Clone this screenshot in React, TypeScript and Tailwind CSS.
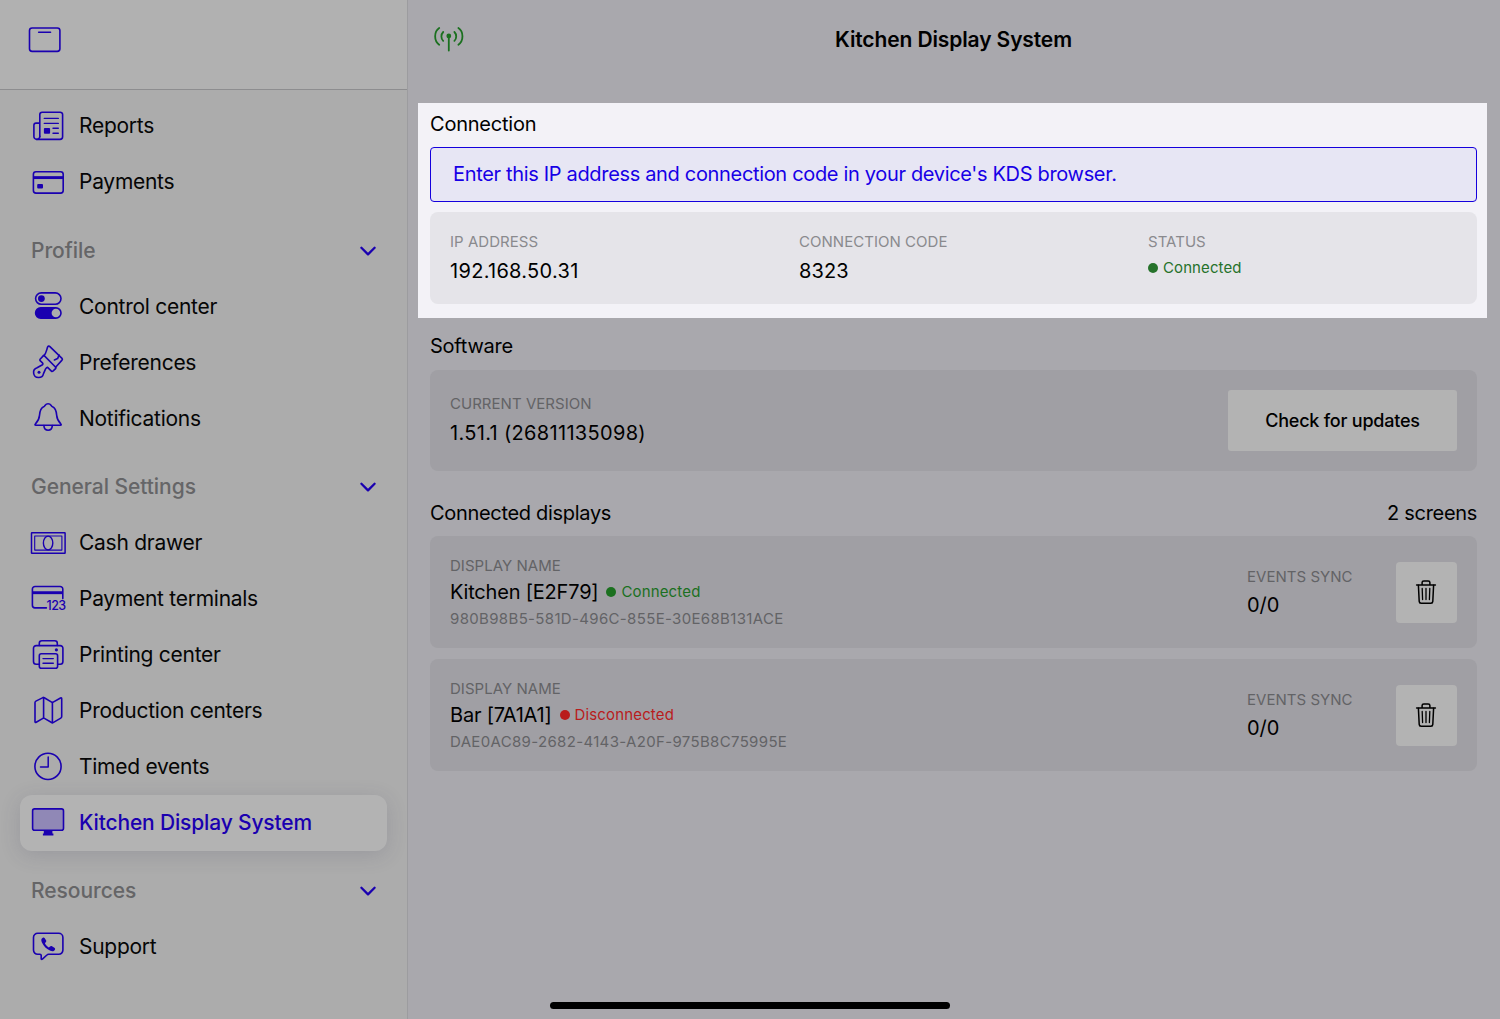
import React, { useState } from "react";
import { clsx } from "clsx";

/* ---------- Icons ---------- */

function MenuIcon({ children }: { children: React.ReactNode }) {
  return (
    <svg
      viewBox="0 0 36 36"
      className="size-9 shrink-0"
      fill="none"
      stroke="currentColor"
      strokeWidth={1.6}
      strokeLinecap="round"
      strokeLinejoin="round"
    >
      {children}
    </svg>
  );
}

const ReportsIcon = () => (
  <MenuIcon>
    <path d="M9.8 28.6V6.6a2.4 2.4 0 0 1 2.4-2.4h18a2.4 2.4 0 0 1 2.4 2.4v22.2a2.6 2.6 0 0 1-2.6 2.6H6.8a2.9 2.9 0 0 1-2.9-2.9V17.3a2.2 2.2 0 0 1 2.2-2.2h3.7" />
    <path d="M9.8 28.4a3 3 0 0 1-3 3" />
    <path d="M14.3 10.4h14M14.3 15.4h14M23 20.3h5.3M23 25.2h5.3" strokeWidth={1.4} />
    <rect x="13.9" y="19.9" width="6.2" height="5.8" rx="1" fill="currentColor" stroke="none" />
  </MenuIcon>
);

const PaymentsIcon = () => (
  <MenuIcon>
    <rect x="3.4" y="7.7" width="29.8" height="21.4" rx="2.6" />
    <path d="M3.4 13.6h29.8" strokeWidth={2.9} strokeLinecap="butt" />
    <rect x="7.2" y="20" width="5.8" height="4.6" rx="1" fill="currentColor" stroke="none" />
  </MenuIcon>
);

const ControlIcon = () => (
  <MenuIcon>
    <rect x="5.6" y="4.9" width="25.4" height="11.4" rx="5.7" />
    <circle cx="11.4" cy="10.6" r="3.4" fill="currentColor" stroke="none" />
    <rect x="5.6" y="19.8" width="25.4" height="10.3" rx="5.1" fill="currentColor" />
    <circle cx="25.9" cy="25" r="4.3" fill="#acacac" stroke="none" />
  </MenuIcon>
);

const BrushIcon = () => (
  <MenuIcon>
    <path d="M14.2 11.6 L25.7 23.3 C26.1 23.8 26 24.2 25.6 24.6 L22.9 27.2 C22.4 27.6 21.9 27.6 21.4 27.1 L17.6 23.4 C16.8 23.2 16.2 24 15.6 24.9 L13.5 29.6 A5 5 0 1 1 7.1 23.8 L12 21 C12.8 20.5 13.2 19.8 12.7 19.2 L10.1 16.7 C9.7 16.2 9.7 15.7 10.1 15.2 L13 12.1 C13.4 11.5 13.7 11.2 14.2 11.6 Z" />
    <path d="M13.9 11.7 C16.2 9.4 16.5 6.2 17.6 3.1 C18 2 19.1 1.8 19.9 2.6 L32 14.4 C32.6 15 32.5 15.6 32 16.1 L25.6 23.2" />
    <path d="M29.1 11 L27.6 14.6 L24.4 16" />
    <circle cx="9" cy="28.3" r="1.5" fill="currentColor" stroke="none" />
  </MenuIcon>
);

const BellIcon = () => (
  <MenuIcon>
    <path d="M5.7 25.3C4.9 25.3 4.8 24.5 5.3 24C7.8 21.3 9.2 20 9.5 15.4C9.8 10.5 10.8 7.6 14.1 6.4C15.1 6 15.3 3.7 18.1 3.7C20.9 3.7 21.1 6 22.1 6.4C25.4 7.6 26.4 10.5 26.7 15.4C27 20 28.4 21.3 30.9 24C31.4 24.5 31.3 25.3 30.5 25.3Z" />
    <path d="M13.9 25.6C14.1 28.5 15.8 30.2 18.1 30.2C20.4 30.2 22.1 28.5 22.3 25.6" />
  </MenuIcon>
);

const CashIcon = () => (
  <MenuIcon>
    <rect x="1.5" y="7.8" width="33.6" height="20.5" rx="0.4" strokeWidth={1.5} />
    <rect x="4.7" y="11" width="27.2" height="14.1" strokeWidth={1.1} />
    <ellipse cx="18.1" cy="18" rx="4.7" ry="6.9" strokeWidth={1.4} />
  </MenuIcon>
);

const TerminalIcon = () => (
  <MenuIcon>
    <path d="M16.4 26.9H4.9A2.6 2.6 0 0 1 2.4 24.3V8.1A2.6 2.6 0 0 1 5 5.5H30.2A2.6 2.6 0 0 1 32.8 8.1V17.6" />
    <path d="M2.4 11.7h30.4" strokeWidth={2.9} strokeLinecap="butt" />
    <text
      x="16.6"
      y="29.1"
      textLength="19.4"
      fontSize="12.5"
      fontWeight="500"
      fill="currentColor"
      stroke="none"
    >
      123
    </text>
  </MenuIcon>
);

const PrinterIcon = () => (
  <MenuIcon>
    <path d="M9.3 27.2H6.2a2.7 2.7 0 0 1-2.7-2.7V11.3a2.7 2.7 0 0 1 2.7-2.7h24a2.7 2.7 0 0 1 2.7 2.7v13.2a2.7 2.7 0 0 1-2.7 2.7h-2.5" />
    <path d="M9.3 8.4V6.2a2.5 2.5 0 0 1 2.5-2.5h13a2.5 2.5 0 0 1 2.5 2.5v2.2" />
    <rect x="9.3" y="16.8" width="18.3" height="14.5" rx="2" />
    <path d="M13 21.6h10.3M13 26.3h10.3" strokeWidth={1.4} />
    <circle cx="26.4" cy="12.8" r="1.6" fill="currentColor" stroke="none" />
  </MenuIcon>
);

const MapIcon = () => (
  <MenuIcon>
    <path d="M5 9.6Q5 8.6 5.9 8.1L12.9 4.6Q13.6 4.3 14.3 4.7L21.6 9.1Q22.4 9.6 23.2 9.1L30.5 5Q31.7 4.5 31.7 5.7V23.6Q31.7 24.6 30.8 25.1L23.1 29.6Q22.4 30 21.6 29.5L14.4 25.4Q13.6 25 12.9 25.4L6.2 29.2Q5 29.7 5 28.4Z" />
    <path d="M13.6 4.6v20.6M22.4 9.5v20.2" />
  </MenuIcon>
);

const ClockIcon = () => (
  <MenuIcon>
    <circle cx="18" cy="17.4" r="13.1" />
    <path d="M18.2 8v9.9H10.5" strokeWidth={1.5} />
  </MenuIcon>
);

const MonitorIcon = () => (
  <MenuIcon>
    <path d="M13.8 26h8.6v2.6h1v1.9H12.9v-1.9h.9Z" fill="currentColor" stroke="none" />
    <rect x="2.6" y="3.9" width="30.9" height="21.4" rx="2" fill="#9088b6" />
  </MenuIcon>
);

const SupportIcon = () => (
  <MenuIcon>
    <path d="M7.7 4.3H28.7A4.2 4.2 0 0 1 32.9 8.5V21.1A4.2 4.2 0 0 1 28.7 25.3H18.6Q17.6 25.3 16.9 26L12.4 30.1Q11.3 30.8 11.2 29.6V26.3Q11.1 25.3 10 25.3H7.7A4.2 4.2 0 0 1 3.5 21.1V8.5A4.2 4.2 0 0 1 7.7 4.3Z" />
    <path
      d="M12.8 8.7C11.2 9.6 10.9 11.1 11.8 13.3C13.6 17.4 16.6 20.3 20.4 21.8C22.5 22.5 23.9 22.2 24.8 20.9C25.3 20.1 25.2 19.4 24.4 18.8L22 17.3C21.2 16.8 20.6 16.9 20 17.5L19.2 18.3C18.8 18.5 18.4 18.4 18 18C16.8 17 15.9 16 15.2 14.9C14.9 14.4 15 14.1 15.3 13.7L15.9 13C16.4 12.4 16.5 11.9 16 11.2L14.6 9.1C14.1 8.4 13.5 8.3 12.8 8.7Z"
      fill="currentColor"
      stroke="none"
    />
  </MenuIcon>
);

const ChevronIcon = () => (
  <svg viewBox="0 0 18 12" className="h-3 w-[18px]" fill="none" stroke="currentColor" strokeWidth={2.3} strokeLinecap="round" strokeLinejoin="round">
    <path d="M2.4 2.8 9 9.4l6.6-6.6" />
  </svg>
);

const DrawerIcon = () => (
  <svg viewBox="0 0 34 26" className="h-[26px] w-[34px]" fill="none" stroke="currentColor" strokeWidth={1.6} strokeLinecap="round">
    <rect x="1.5" y="1" width="30.4" height="23.4" rx="2.6" />
    <path d="M10.6 5.3h12" strokeWidth={1.4} />
  </svg>
);

const AntennaIcon = () => (
  <svg viewBox="0 0 32 28" className="h-7 w-8" fill="none" stroke="currentColor" strokeWidth={1.8} strokeLinecap="round">
    <circle cx="15.8" cy="11" r="2.4" fill="currentColor" stroke="none" />
    <path d="M15.8 11v14.6" />
    <path d="M6.2 3C.8 6.6.8 16 6.2 19.7M25.4 3c5.4 3.6 5.4 13 0 16.7" />
    <path d="M10.2 7c-2.4 2.4-2.4 6.4 0 8.8M21.4 7c2.4 2.4 2.4 6.4 0 8.8" />
  </svg>
);

const TrashIcon = () => (
  <svg viewBox="0 0 22 26" className="h-[26px] w-[22px]" fill="none" stroke="currentColor" strokeWidth={1.5} strokeLinecap="round" strokeLinejoin="round">
    <path d="M1.6 6h18.8M7.1 5.8V3.6a1.7 1.7 0 0 1 1.7-1.7h4.4a1.7 1.7 0 0 1 1.7 1.7v2.2" />
    <path d="m3.4 6.2.8 16.2a1.9 1.9 0 0 0 1.9 1.8h9.8a1.9 1.9 0 0 0 1.9-1.8l.8-16.2" />
    <path d="m7.2 9.4.4 11.2M11 9.4v11.2M14.8 9.4l-.4 11.2" strokeWidth={1.3} />
  </svg>
);

/* ---------- Sidebar ---------- */

type Item = { label: string; icon: () => React.ReactElement };

const topItems: Item[] = [
  { label: "Reports", icon: ReportsIcon },
  { label: "Payments", icon: PaymentsIcon },
];

const sections: { title: string; items: Item[] }[] = [
  {
    title: "Profile",
    items: [
      { label: "Control center", icon: ControlIcon },
      { label: "Preferences", icon: BrushIcon },
      { label: "Notifications", icon: BellIcon },
    ],
  },
  {
    title: "General Settings",
    items: [
      { label: "Cash drawer", icon: CashIcon },
      { label: "Payment terminals", icon: TerminalIcon },
      { label: "Printing center", icon: PrinterIcon },
      { label: "Production centers", icon: MapIcon },
      { label: "Timed events", icon: ClockIcon },
      { label: "Kitchen Display System", icon: MonitorIcon },
    ],
  },
  {
    title: "Resources",
    items: [{ label: "Support", icon: SupportIcon }],
  },
];

function SidebarItem({ item, active, onSelect }: { item: Item; active: boolean; onSelect: () => void }) {
  const Icon = item.icon;
  return (
    <button
      onClick={onSelect}
      className={clsx(
        "flex h-14 w-full cursor-pointer items-center gap-[13px] rounded-[12px] pl-2.5 text-[21px] text-[#1a00b0]",
        active && "bg-[#b3b3b3] shadow-[0_4px_20px_rgba(60,60,90,0.17)]"
      )}
    >
      <Icon />
      <span
        className={clsx(
          "whitespace-nowrap",
          active ? "font-medium tracking-[-0.16px]" : "tracking-[-0.27px] text-[#060606]"
        )}
      >
        {item.label}
      </span>
    </button>
  );
}

/* ---------- Content blocks ---------- */

function Field({ label, children, dim = true }: { label: string; children: React.ReactNode; dim?: boolean }) {
  return (
    <div>
      <div className={clsx("text-[15px] leading-5 tracking-[0.03px]", dim ? "text-[#636366]" : "text-[#8a8a8e]")}>
        {label}
      </div>
      {children}
    </div>
  );
}

function Display({ name, id, connected }: { name: string; id: string; connected: boolean }) {
  return (
    <div className="flex h-28 items-center rounded-lg bg-[#a09fa4] px-5">
      <div className="flex-1 pt-px">
        <Field label="DISPLAY NAME">
          <div className="mt-0.5 flex h-7 items-center">
            <span className="text-[20px] tracking-[-0.2px]">{name}</span>
            <span
              className={clsx(
                "ml-2 flex items-center gap-[5px] text-[15px] tracking-[0.15px]",
                connected ? "text-[#1b701f]" : "text-[#b91c1c]"
              )}
            >
              <span className="size-2.5 rounded-full bg-current" />
              {connected ? "Connected" : "Disconnected"}
            </span>
          </div>
          <div className="mt-[3px] text-[15px] leading-5 tracking-[0.34px] text-[#636366]">{id}</div>
        </Field>
      </div>
      <div className="w-[149px] pt-0.5">
        <Field label="EVENTS SYNC">
          <div className="mt-1 text-[20px] leading-7">0/0</div>
        </Field>
      </div>
      <button className="flex size-[61px] cursor-pointer items-center justify-center rounded bg-[#b3b3b3] pr-px">
        <TrashIcon />
      </button>
    </div>
  );
}

export default function App() {
  const [active, setActive] = useState("Kitchen Display System");

  return (
    <div className="relative flex h-[1019px] w-[1500px] overflow-hidden bg-[#a9a8ad] font-['Inter',sans-serif] text-black">
      {/* Sidebar */}
      <aside className="flex w-[408px] shrink-0 flex-col border-r border-[#9c9c9f] bg-[#acacac]">
        <div className="h-[90px] shrink-0 border-b border-[#8d8d8f] bg-[#b1b1b1] pt-[27px] pl-7 text-[#1a00b0]">
          <DrawerIcon />
        </div>
        <nav className="px-5 pt-2">
          {topItems.map((item) => (
            <SidebarItem key={item.label} item={item} active={active === item.label} onSelect={() => setActive(item.label)} />
          ))}
          {sections.map((section) => (
            <div key={section.title}>
              <div className="flex h-[68.3px] items-center justify-between pt-[13px] pr-2.5 pl-[11px] text-[21px] font-medium tracking-[-0.05px] text-[#656567]">
                {section.title}
                <span className="text-[#1a00b0]">
                  <ChevronIcon />
                </span>
              </div>
              {section.items.map((item) => (
                <SidebarItem key={item.label} item={item} active={active === item.label} onSelect={() => setActive(item.label)} />
              ))}
            </div>
          ))}
        </nav>
      </aside>

      {/* Main */}
      <main className="flex-1">
        <header className="grid h-[103px] grid-cols-[1fr_auto_1fr] items-start pt-[25px] pr-[26px] pl-[25px]">
          <span className="text-[#1b701f]">
            <AntennaIcon />
          </span>
          <h1 className="text-[21px] leading-[30px] font-semibold tracking-[-0.12px]">Kitchen Display System</h1>
        </header>

        <section className="mr-[13px] ml-2.5 h-[215px] bg-[#f3f2f7] px-3 pr-2.5 pt-1.5">
          <h2 className="text-[20px] leading-[30px] tracking-[-0.22px]">Connection</h2>
          <div className="mt-2 flex h-[55px] items-center rounded border border-[#1500dd] bg-[#e7e6f4] pb-0.5 pl-[22px] text-[20px] tracking-[-0.33px] text-[#1700e6]">
            Enter this IP address and connection code in your device's KDS browser.
          </div>
          <div className="mt-2.5 grid h-[92px] grid-cols-[349px_349px_1fr] rounded-lg bg-[#e5e4e9] pt-5 pl-5">
            <Field label="IP ADDRESS" dim={false}>
              <div className="mt-[5px] text-[20px] leading-7 tracking-[0.3px]">192.168.50.31</div>
            </Field>
            <Field label="CONNECTION CODE" dim={false}>
              <div className="mt-[5px] text-[20px] leading-7 tracking-[0.1px]">8323</div>
            </Field>
            <Field label="STATUS" dim={false}>
              <div className="mt-1.5 flex items-center gap-[5px] text-[15px] leading-5 tracking-[0.1px] text-[#26722b]">
                <span className="size-2.5 rounded-full bg-current" />
                Connected
              </div>
            </Field>
          </div>
        </section>

        <div className="pr-[23px] pl-[22px]">
          <h2 className="mt-[13px] text-[20px] leading-[30px] tracking-[-0.25px]">Software</h2>
          <div className="mt-[9px] flex h-[101px] items-center justify-between rounded-lg bg-[#a09fa4] px-5">
            <Field label="CURRENT VERSION">
              <div className="mt-[5px] text-[20px] leading-7 tracking-[0.32px]">1.51.1 (26811135098)</div>
            </Field>
            <button className="h-[61px] w-[229px] cursor-pointer rounded-[3px] bg-[#b3b3b3] pb-px text-[18px] font-medium tracking-[-0.22px]">
              Check for updates
            </button>
          </div>

          <div className="mt-[27px] flex justify-between text-[20px] leading-[30px] tracking-[-0.31px]">
            <h2>Connected displays</h2>
            <span>2 screens</span>
          </div>
          <div className="mt-2 flex flex-col gap-[11px]">
            <Display name="Kitchen [E2F79]" id="980B98B5-581D-496C-855E-30E68B131ACE" connected />
            <Display name="Bar [7A1A1]" id="DAE0AC89-2682-4143-A20F-975B8C75995E" connected={false} />
          </div>
        </div>
      </main>

      {/* Home indicator */}
      <div className="absolute bottom-2.5 left-1/2 h-[7px] w-[400px] -translate-x-1/2 rounded-full bg-black" />
    </div>
  );
}
